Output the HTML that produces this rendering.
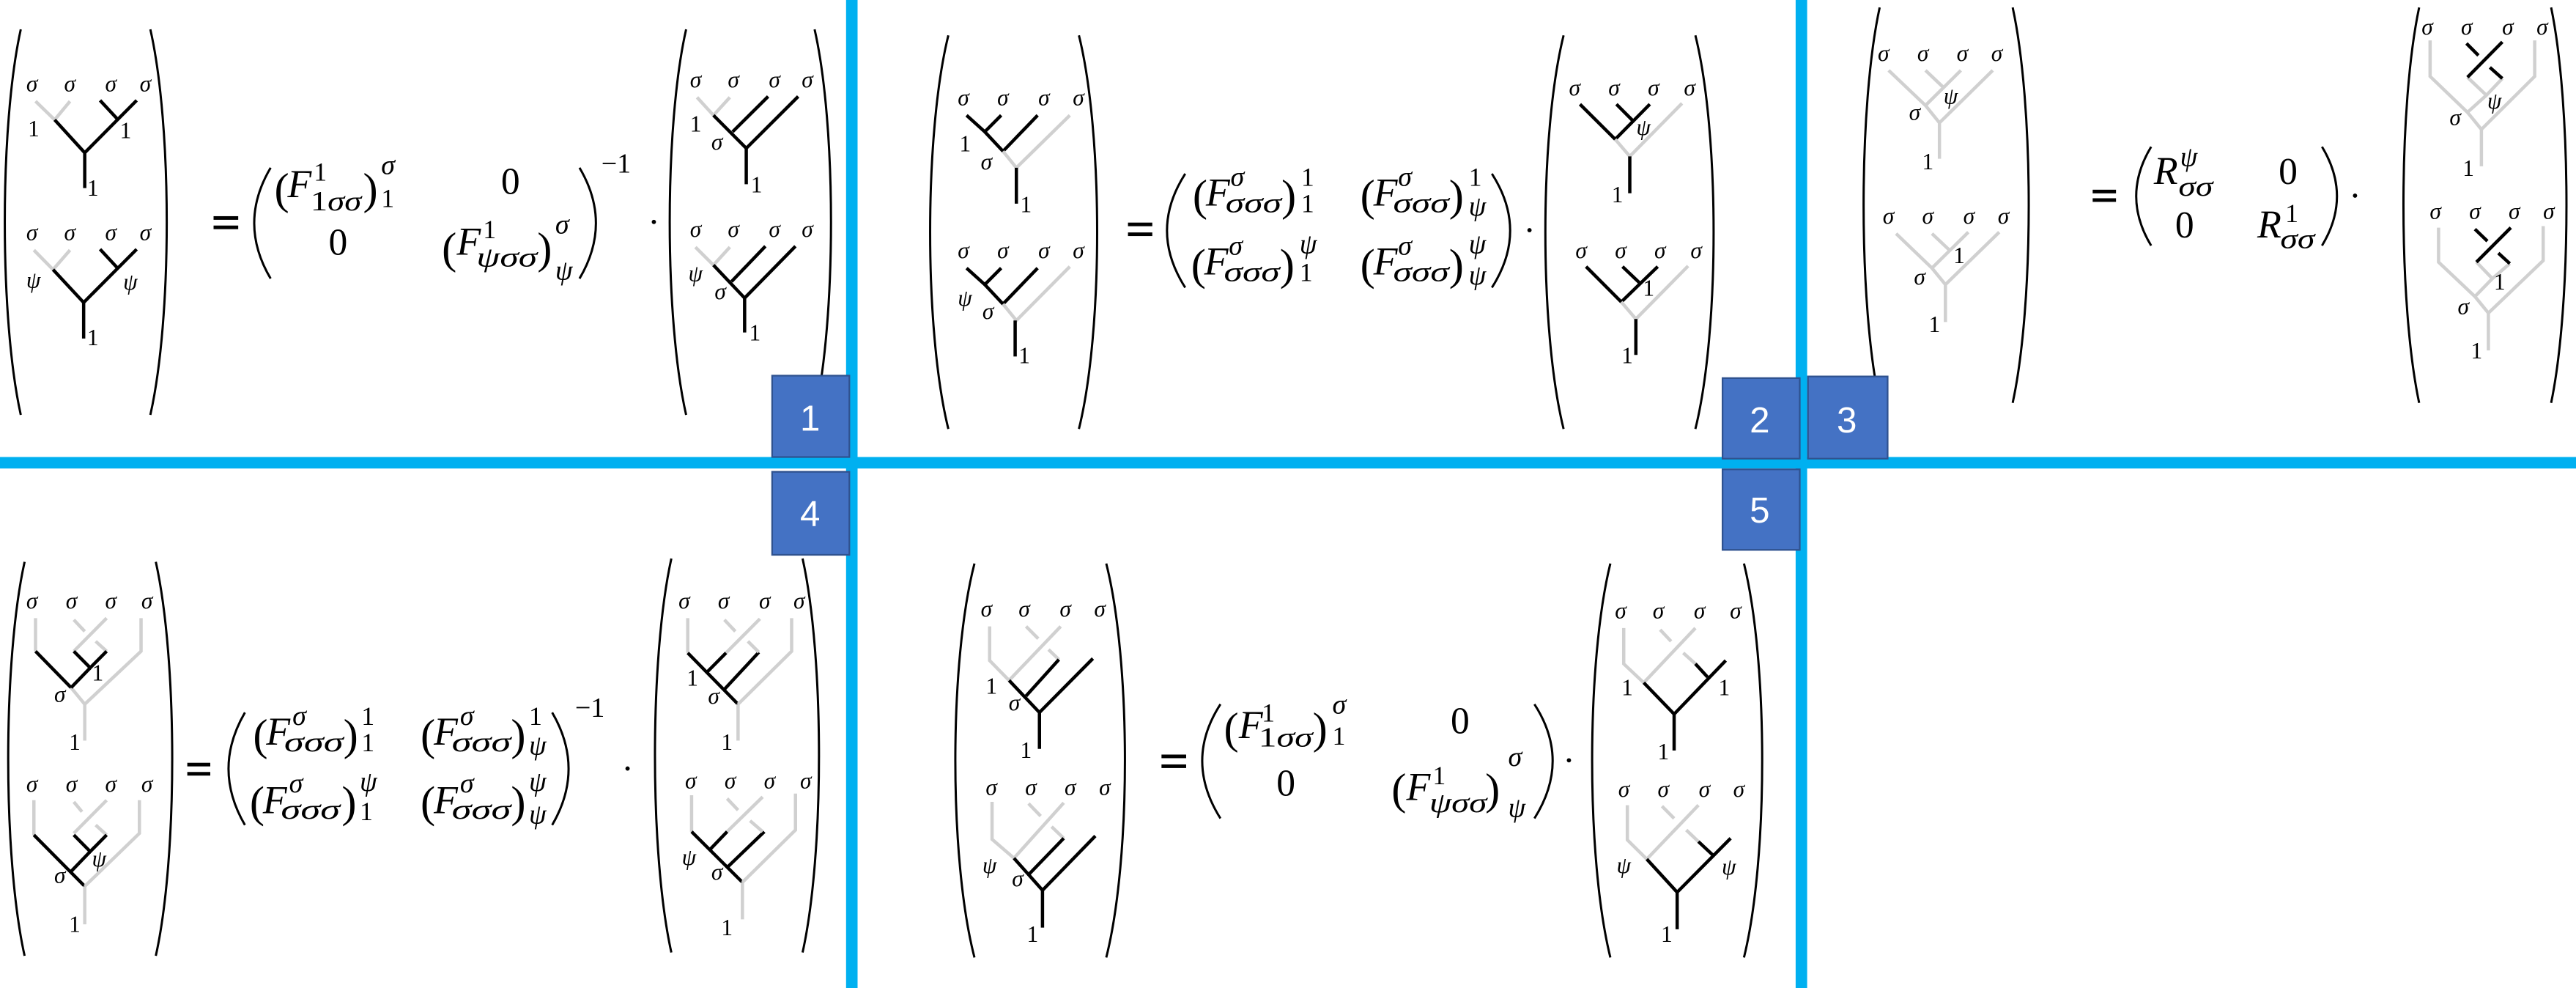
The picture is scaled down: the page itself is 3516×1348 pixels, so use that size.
<!DOCTYPE html>
<html><head><meta charset="utf-8"><style>
html,body{margin:0;padding:0;background:#fff;}
svg{display:block}
.b,.g,.p{fill:none;vector-effect:non-scaling-stroke;stroke-linecap:butt}
.b{stroke:#000;stroke-width:4.5}
.g{stroke:#d0d0d0;stroke-width:4.5}
.p{stroke:#000;stroke-width:3}
text{font-family:"Liberation Serif",serif;fill:#000}
.s{font-style:italic;font-size:14px}
.n{font-size:14px}
.m{font-style:italic;font-size:24px}
.r{font-size:23px}
.pp{font-size:27px}
.ss{font-style:italic;font-size:17px}
.sn{font-size:16px}
.bx{fill:#4472C4;stroke:#2F528F;stroke-width:1}
.bt{font-family:"Liberation Sans",sans-serif;font-size:22px;fill:#fff}
</style></head><body>
<svg width="3516" height="1348" viewBox="0 0 1568 601" preserveAspectRatio="none" xmlns="http://www.w3.org/2000/svg">
<rect width="1568" height="601" fill="#fff"/>

<!-- PANEL 1 -->
<g transform="translate(0,0) scale(0.33278,0.18221)">
<path class="p" d="M38 98 C-1 420 -1 1063 38 1385"/><path class="p" d="M275 98 C315 420 315 1063 275 1385"/>
<polyline class="g" points="65,338 100,400 128,338"/>
<polyline class="b" points="100,400 155,510"/><polyline class="b" points="183,335 215,398"/><polyline class="b" points="250,335 155,510 155,628"/>
<polyline class="g" points="62,835 97,900 128,835"/>
<polyline class="b" points="97,900 153,1010"/><polyline class="b" points="183,832 215,895"/><polyline class="b" points="250,832 153,1010 153,1130"/>
<path class="p" d="M495 560 Q435 745 495 930"/><path class="p" d="M1060 560 Q1120 745 1060 930"/>
<path class="p" d="M1255 98 C1215 420 1215 1063 1255 1385"/><path class="p" d="M1490 98 C1530 420 1530 1063 1490 1385"/>
<polyline class="g" points="1275,325 1305,385 1335,325"/>
<polyline class="b" points="1305,385 1365,495 1365,615"/><polyline class="b" points="1405,322 1340,440"/><polyline class="b" points="1460,322 1365,495"/>
<polyline class="g" points="1272,825 1305,885 1335,825"/>
<polyline class="b" points="1305,885 1362,995 1362,1110"/><polyline class="b" points="1400,822 1338,940"/><polyline class="b" points="1455,822 1362,995"/>
</g>
<text class="s" x="16" y="55.5">σ</text><text class="s" x="39" y="55.5">σ</text><text class="s" x="64" y="55.5">σ</text><text class="s" x="85" y="55.5">σ</text>
<text class="n" x="17" y="83">1</text><text class="n" x="73" y="84">1</text><text class="n" x="53" y="119">1</text>
<text class="s" x="16" y="146">σ</text><text class="s" x="39" y="146">σ</text><text class="s" x="64" y="146">σ</text><text class="s" x="85" y="146">σ</text>
<text class="s" x="16" y="175">ψ</text><text class="s" x="75" y="176">ψ</text><text class="n" x="53" y="210">1</text>
<rect x="130" y="131.5" width="15" height="2.2"/><rect x="130" y="137.2" width="15" height="2.2"/>
<text class="pp" x="167" y="124">(</text><text class="m" x="175" y="120">F</text><text class="sn" x="191" y="110">1</text><text class="ss" x="189" y="128" textLength="31" lengthAdjust="spacingAndGlyphs"><tspan font-style="normal">1</tspan>σσ</text><text class="pp" x="221" y="124">)</text><text class="ss" x="232" y="106">σ</text><text class="sn" x="232" y="126">1</text>
<text class="r" x="305" y="118">0</text>
<text class="r" x="200" y="155">0</text>
<text class="pp" x="269" y="160">(</text><text class="m" x="278" y="155">F</text><text class="sn" x="294" y="145">1</text><text class="ss" x="290" y="162" textLength="37" lengthAdjust="spacingAndGlyphs">ψσσ</text><text class="pp" x="327" y="160">)</text><text class="ss" x="338" y="142">σ</text><text class="ss" x="338" y="170">ψ</text>
<text x="366" y="105" font-family="Liberation Sans" font-size="17">−1</text>
<circle cx="398" cy="135" r="1.3"/>
<text class="s" x="420" y="53">σ</text><text class="s" x="443" y="53">σ</text><text class="s" x="468" y="53">σ</text><text class="s" x="488" y="53">σ</text>
<text class="n" x="420" y="80">1</text><text class="s" x="433" y="91">σ</text><text class="n" x="457" y="117">1</text>
<text class="s" x="420" y="144">σ</text><text class="s" x="443" y="144">σ</text><text class="s" x="468" y="144">σ</text><text class="s" x="488" y="144">σ</text>
<text class="s" x="419" y="171">ψ</text><text class="s" x="435" y="182">σ</text><text class="n" x="456" y="207">1</text>

<!-- PANEL 2 -->
<g transform="translate(521.8,0) scale(0.36969,0.18221)">
<path class="p" d="M150 118 C110 446 110 1104 150 1432"/><path class="p" d="M365 118 C405 446 405 1104 365 1432"/>
<polyline class="b" points="180,385 210,440 237,385"/><polyline class="b" points="210,440 240,505 297,385"/>
<polyline class="g" points="240,505 262,560 350,385"/><polyline class="b" points="262,560 262,680"/>
<polyline class="b" points="180,895 210,950 237,895"/><polyline class="b" points="210,950 240,1015 297,895"/>
<polyline class="g" points="240,1015 262,1070 350,890"/><polyline class="b" points="260,1070 260,1190"/>
<path class="p" d="M540 580 Q480 770 540 960"/><path class="p" d="M1045 580 Q1105 770 1045 960"/>
<path class="p" d="M1163 118 C1123 446 1123 1104 1163 1432"/><path class="p" d="M1380 118 C1420 446 1420 1104 1380 1432"/>
<polyline class="b" points="1190,348 1248,465 1305,348"/><polyline class="b" points="1250,348 1278,405"/>
<polyline class="g" points="1248,465 1272,522 1358,345"/><polyline class="b" points="1272,522 1272,645"/>
<polyline class="b" points="1200,890 1258,1008 1318,890"/><polyline class="b" points="1260,890 1290,948"/>
<polyline class="g" points="1258,1008 1282,1065 1368,888"/><polyline class="b" points="1282,1065 1282,1185"/>
</g>
<text class="s" x="583" y="64">σ</text><text class="s" x="607" y="64">σ</text><text class="s" x="632" y="64">σ</text><text class="s" x="653" y="64">σ</text>
<text class="n" x="584" y="92">1</text><text class="s" x="597" y="103">σ</text><text class="n" x="621" y="129">1</text>
<text class="s" x="583" y="157">σ</text><text class="s" x="607" y="157">σ</text><text class="s" x="632" y="157">σ</text><text class="s" x="653" y="157">σ</text>
<text class="s" x="583" y="186">ψ</text><text class="s" x="598" y="194">σ</text><text class="n" x="620" y="221">1</text>
<rect x="686.6" y="135.4" width="14.8" height="2.2"/><rect x="686.6" y="141.4" width="14.8" height="2.2"/>
<text class="pp" x="726" y="128">(</text><text class="m" x="734" y="125">F</text><text class="ss" x="749" y="113">σ</text><text class="ss" x="746" y="129" textLength="34" lengthAdjust="spacingAndGlyphs">σσσ</text><text class="pp" x="780" y="128">)</text><text class="sn" x="792" y="113">1</text><text class="sn" x="792" y="129">1</text>
<text class="pp" x="828" y="128">(</text><text class="m" x="836" y="125">F</text><text class="ss" x="851" y="113">σ</text><text class="ss" x="848" y="129" textLength="34" lengthAdjust="spacingAndGlyphs">σσσ</text><text class="pp" x="882" y="128">)</text><text class="sn" x="894" y="113">1</text><text class="ss" x="894" y="131">ψ</text>
<text class="pp" x="725" y="170">(</text><text class="m" x="733" y="167">F</text><text class="ss" x="748" y="155">σ</text><text class="ss" x="745" y="171" textLength="34" lengthAdjust="spacingAndGlyphs">σσσ</text><text class="pp" x="779" y="170">)</text><text class="ss" x="791" y="154">ψ</text><text class="sn" x="791" y="171">1</text>
<text class="pp" x="828" y="170">(</text><text class="m" x="836" y="167">F</text><text class="ss" x="851" y="155">σ</text><text class="ss" x="848" y="171" textLength="34" lengthAdjust="spacingAndGlyphs">σσσ</text><text class="pp" x="882" y="170">)</text><text class="ss" x="894" y="154">ψ</text><text class="ss" x="894" y="173">ψ</text>
<circle cx="931" cy="140" r="1.3"/>
<text class="s" x="955" y="58">σ</text><text class="s" x="979" y="58">σ</text><text class="s" x="1003" y="58">σ</text><text class="s" x="1025" y="58">σ</text>
<text class="s" x="996" y="82">ψ</text><text class="n" x="981" y="123">1</text>
<text class="s" x="959" y="157">σ</text><text class="s" x="983" y="157">σ</text><text class="s" x="1007" y="157">σ</text><text class="s" x="1029" y="157">σ</text>
<text class="n" x="1000" y="180">1</text><text class="n" x="987" y="221">1</text>

<!-- PANEL 3 -->
<g transform="translate(1092.6,0) scale(0.30321,0.18221)">
<path class="p" d="M170 25 C127 355 127 1015 170 1345"/><path class="p" d="M437 25 C480 355 480 1015 437 1345"/>
<polyline class="g" points="188,235 262,352 290,410 397,235"/><polyline class="g" points="262,235 300,295"/><polyline class="g" points="333,235 262,352"/><polyline class="g" points="290,410 290,530"/>
<polyline class="g" points="203,780 275,895 302,950 410,775"/><polyline class="g" points="275,780 312,838"/><polyline class="g" points="348,775 275,895"/><polyline class="g" points="302,950 302,1075"/>
<path class="p" d="M715 490 Q655 655 715 820"/><path class="p" d="M1058 490 Q1118 655 1058 820"/>
<path class="p" d="M1253 25 C1211 355 1211 1015 1253 1345"/><path class="p" d="M1518 25 C1559 355 1559 1015 1518 1345"/>
<polyline class="g" points="1275,135 1275,255 1350,375 1378,432 1378,555"/>
<polyline class="g" points="1485,135 1485,255 1378,432"/>
<polyline class="g" points="1350,258 1388,318 1420,262"/><polyline class="g" points="1388,318 1350,375"/>
<polyline class="b" points="1420,140 1350,258"/><polyline class="b" points="1348,145 1372,185"/><polyline class="b" points="1395,225 1420,262"/>
<polyline class="g" points="1292,760 1292,875 1365,990 1392,1045 1392,1170"/>
<polyline class="g" points="1502,755 1502,870 1392,1045"/>
<polyline class="g" points="1368,875 1400,930 1435,880"/><polyline class="g" points="1400,930 1365,990"/>
<polyline class="b" points="1437,760 1368,875"/><polyline class="b" points="1365,765 1390,805"/><polyline class="b" points="1412,845 1435,880"/>
</g>
<text class="s" x="1143" y="37">σ</text><text class="s" x="1167" y="37">σ</text><text class="s" x="1191" y="37">σ</text><text class="s" x="1212" y="37">σ</text>
<text class="s" x="1183" y="63">ψ</text><text class="s" x="1162" y="73">σ</text><text class="n" x="1170" y="103">1</text>
<text class="s" x="1146" y="136">σ</text><text class="s" x="1170" y="136">σ</text><text class="s" x="1195" y="136">σ</text><text class="s" x="1216" y="136">σ</text>
<text class="n" x="1189" y="160">1</text><text class="s" x="1165" y="173">σ</text><text class="n" x="1174" y="202">1</text>
<rect x="1273.8" y="115.4" width="14.2" height="2.2"/><rect x="1273.8" y="120.6" width="14.2" height="2.2"/>
<text class="m" x="1311" y="112">R</text><text class="ss" x="1327" y="101">ψ</text><text class="ss" x="1326" y="119" textLength="21" lengthAdjust="spacingAndGlyphs">σσ</text><text class="r" x="1387" y="112">0</text>
<text class="r" x="1324" y="144.5">0</text><text class="m" x="1374" y="144.5">R</text><text class="sn" x="1391" y="135">1</text><text class="ss" x="1388" y="151" textLength="21" lengthAdjust="spacingAndGlyphs">σσ</text>
<circle cx="1433.5" cy="119" r="1.3"/>
<text class="s" x="1474" y="21">σ</text><text class="s" x="1498" y="21">σ</text><text class="s" x="1523" y="21">σ</text><text class="s" x="1544" y="21">σ</text>
<text class="s" x="1514" y="66">ψ</text><text class="s" x="1491" y="76">σ</text><text class="n" x="1499" y="107">1</text>
<text class="s" x="1479" y="133">σ</text><text class="s" x="1503" y="133">σ</text><text class="s" x="1527" y="133">σ</text><text class="s" x="1548" y="133">σ</text>
<text class="n" x="1518" y="176">1</text><text class="s" x="1496" y="191">σ</text><text class="n" x="1504" y="218">1</text>

<!-- PANEL 4 -->
<g transform="translate(0,285.4) scale(0.33278,0.20137)">
<path class="p" d="M45 280 C5 578 5 1173 45 1470"/><path class="p" d="M285 280 C325 578 325 1173 285 1470"/>
<polyline class="g" points="65,450 65,550"/><polyline class="b" points="65,550 130,660"/><polyline class="g" points="130,660 155,710 155,820"/>
<polyline class="g" points="258,450 258,550 155,710"/>
<polyline class="g" points="195,450 135,550"/><polyline class="g" points="135,455 155,490"/><polyline class="g" points="175,520 195,550"/>
<polyline class="b" points="135,550 165,600 195,550"/><polyline class="b" points="165,600 130,660"/>
<polyline class="g" points="62,1000 62,1105"/><polyline class="b" points="62,1105 155,1260"/><polyline class="g" points="155,1260 155,1375"/>
<polyline class="g" points="255,1000 255,1100 155,1260"/>
<polyline class="g" points="195,1000 135,1100"/><polyline class="g" points="135,1005 150,1035"/><polyline class="g" points="175,1075 195,1105"/>
<polyline class="b" points="135,1105 165,1155 195,1105"/><polyline class="b" points="165,1155 130,1215"/>
<path class="p" d="M448 735 Q388 905 448 1075"/><path class="p" d="M1010 735 Q1070 905 1010 1075"/>
<path class="p" d="M1228 270 C1188 568 1188 1163 1228 1460"/><path class="p" d="M1468 270 C1508 568 1508 1163 1468 1460"/>
<polyline class="g" points="1258,450 1258,555"/><polyline class="b" points="1258,555 1350,710"/><polyline class="g" points="1350,710 1350,820"/>
<polyline class="g" points="1390,452 1328,555"/><polyline class="b" points="1328,555 1292,615"/><polyline class="b" points="1388,553 1325,665"/>
<polyline class="g" points="1325,455 1345,490"/><polyline class="g" points="1368,520 1388,553"/>
<polyline class="g" points="1448,450 1448,550 1350,710"/>
<polyline class="g" points="1265,985 1265,1095"/><polyline class="b" points="1265,1095 1358,1248"/><polyline class="g" points="1358,1248 1358,1360"/>
<polyline class="g" points="1395,990 1330,1095"/><polyline class="b" points="1330,1095 1298,1150"/><polyline class="b" points="1398,1095 1332,1200"/>
<polyline class="g" points="1330,995 1350,1030"/><polyline class="g" points="1372,1062 1395,1095"/>
<polyline class="g" points="1455,980 1455,1090 1358,1248"/>
</g>
<text class="s" x="16" y="370">σ</text><text class="s" x="40" y="370">σ</text><text class="s" x="64" y="370">σ</text><text class="s" x="86" y="370">σ</text>
<text class="n" x="56" y="414">1</text><text class="s" x="33" y="427">σ</text><text class="n" x="42" y="456">1</text>
<text class="s" x="16" y="481.6">σ</text><text class="s" x="40" y="481.6">σ</text><text class="s" x="64" y="481.6">σ</text><text class="s" x="86" y="481.6">σ</text>
<text class="s" x="56" y="527">ψ</text><text class="s" x="33" y="537">σ</text><text class="n" x="42" y="567">1</text>
<rect x="114" y="464" width="14" height="2.2"/><rect x="114" y="469.6" width="14" height="2.2"/>
<text class="pp" x="154" y="456">(</text><text class="m" x="162" y="453">F</text><text class="ss" x="178" y="441">σ</text><text class="ss" x="173" y="457" textLength="36" lengthAdjust="spacingAndGlyphs">σσσ</text><text class="pp" x="209" y="456">)</text><text class="sn" x="220" y="441">1</text><text class="sn" x="220" y="457">1</text>
<text class="pp" x="256" y="456">(</text><text class="m" x="264" y="453">F</text><text class="ss" x="280" y="441">σ</text><text class="ss" x="275" y="457" textLength="36" lengthAdjust="spacingAndGlyphs">σσσ</text><text class="pp" x="311" y="456">)</text><text class="sn" x="322" y="441">1</text><text class="ss" x="322" y="459">ψ</text>
<text class="pp" x="152" y="497">(</text><text class="m" x="160" y="494.7">F</text><text class="ss" x="176" y="482">σ</text><text class="ss" x="171" y="498" textLength="36" lengthAdjust="spacingAndGlyphs">σσσ</text><text class="pp" x="208" y="497">)</text><text class="ss" x="219" y="481">ψ</text><text class="sn" x="219" y="499">1</text>
<text class="pp" x="256" y="497">(</text><text class="m" x="264" y="494.7">F</text><text class="ss" x="280" y="482">σ</text><text class="ss" x="275" y="498" textLength="36" lengthAdjust="spacingAndGlyphs">σσσ</text><text class="pp" x="311" y="497">)</text><text class="ss" x="322" y="481">ψ</text><text class="ss" x="322" y="501">ψ</text>
<text x="350" y="436" font-family="Liberation Sans" font-size="17">−1</text>
<circle cx="382" cy="467.5" r="1.3"/>
<text class="s" x="413" y="370">σ</text><text class="s" x="437" y="370">σ</text><text class="s" x="462" y="370">σ</text><text class="s" x="483" y="370">σ</text>
<text class="n" x="418" y="417">1</text><text class="s" x="431" y="428">σ</text><text class="n" x="439" y="456">1</text>
<text class="s" x="417" y="479.6">σ</text><text class="s" x="441" y="479.6">σ</text><text class="s" x="465" y="479.6">σ</text><text class="s" x="487" y="479.6">σ</text>
<text class="s" x="415" y="526">ψ</text><text class="s" x="433" y="535">σ</text><text class="n" x="439" y="569">1</text>

<!-- PANEL 5 -->
<g transform="translate(521.8,285.4) scale(0.36969,0.20137)">
<path class="p" d="M193 285 C151 583 151 1178 193 1475"/><path class="p" d="M410 285 C451 583 451 1178 410 1475"/>
<polyline class="g" points="218,475 218,578 250,638"/><polyline class="g" points="335,475 250,638"/>
<polyline class="g" points="278,475 298,512"/><polyline class="g" points="315,545 332,575"/>
<polyline class="b" points="332,575 278,685"/><polyline class="b" points="388,572 300,735"/><polyline class="b" points="250,638 300,735 300,845"/>
<polyline class="g" points="222,1005 222,1118 258,1175"/><polyline class="g" points="340,1008 258,1175"/>
<polyline class="g" points="282,1010 302,1048"/><polyline class="g" points="320,1080 340,1115"/>
<polyline class="b" points="340,1115 282,1225"/><polyline class="b" points="392,1108 305,1272"/><polyline class="b" points="258,1175 305,1272 305,1385"/>
<path class="p" d="M598 710 Q538 880 598 1055"/><path class="p" d="M1115 710 Q1175 880 1115 1055"/>
<path class="p" d="M1240 285 C1200 583 1200 1178 1240 1475"/><path class="p" d="M1460 285 C1500 583 1500 1178 1460 1475"/>
<polyline class="g" points="1262,480 1262,588 1295,645"/><polyline class="g" points="1380,480 1295,645"/>
<polyline class="g" points="1322,485 1340,520"/><polyline class="g" points="1360,555 1380,588"/>
<polyline class="b" points="1380,588 1400,628"/><polyline class="b" points="1430,578 1345,740"/><polyline class="b" points="1295,645 1345,740 1345,850"/>
<polyline class="g" points="1268,1015 1268,1120 1300,1178"/><polyline class="g" points="1385,1015 1300,1178"/>
<polyline class="g" points="1325,1018 1345,1055"/><polyline class="g" points="1365,1090 1385,1125"/>
<polyline class="b" points="1385,1125 1410,1168"/><polyline class="b" points="1438,1115 1350,1278"/><polyline class="b" points="1300,1178 1350,1278 1350,1390"/>
</g>
<text class="s" x="597" y="375">σ</text><text class="s" x="620" y="375">σ</text><text class="s" x="645" y="375">σ</text><text class="s" x="666" y="375">σ</text>
<text class="n" x="600" y="422">1</text><text class="s" x="614" y="432">σ</text><text class="n" x="621" y="461">1</text>
<text class="s" x="600" y="483.6">σ</text><text class="s" x="624" y="483.6">σ</text><text class="s" x="648" y="483.6">σ</text><text class="s" x="669" y="483.6">σ</text>
<text class="s" x="598" y="531">ψ</text><text class="s" x="616" y="539">σ</text><text class="n" x="625" y="573">1</text>
<rect x="707" y="459" width="15" height="2.2"/><rect x="707" y="465" width="15" height="2.2"/>
<text class="pp" x="745" y="452">(</text><text class="m" x="754" y="449">F</text><text class="sn" x="768" y="439">1</text><text class="ss" x="766" y="454" textLength="33" lengthAdjust="spacingAndGlyphs"><tspan font-style="normal">1</tspan>σσ</text><text class="pp" x="799" y="452">)</text><text class="ss" x="811" y="434">σ</text><text class="sn" x="811" y="453">1</text>
<text class="r" x="883" y="446">0</text>
<text class="r" x="777" y="484">0</text>
<text class="pp" x="847" y="489">(</text><text class="m" x="856" y="486.6">F</text><text class="sn" x="872" y="477">1</text><text class="ss" x="870" y="494" textLength="35" lengthAdjust="spacingAndGlyphs">ψσσ</text><text class="pp" x="904" y="489">)</text><text class="ss" x="918" y="466">σ</text><text class="ss" x="918" y="497">ψ</text>
<circle cx="955" cy="462.5" r="1.3"/>
<text class="s" x="983" y="376">σ</text><text class="s" x="1006" y="376">σ</text><text class="s" x="1031" y="376">σ</text><text class="s" x="1053" y="376">σ</text>
<text class="n" x="987" y="423">1</text><text class="n" x="1046" y="423">1</text><text class="n" x="1009" y="462">1</text>
<text class="s" x="985" y="484.6">σ</text><text class="s" x="1009" y="484.6">σ</text><text class="s" x="1034" y="484.6">σ</text><text class="s" x="1055" y="484.6">σ</text>
<text class="s" x="984" y="531">ψ</text><text class="s" x="1048" y="532">ψ</text><text class="n" x="1011" y="573">1</text>

<!-- blue lines -->
<rect x="0" y="278" width="1568" height="7" fill="#00B0F0"/>
<rect x="515" y="0" width="7" height="601" fill="#00B0F0"/>
<rect x="1093" y="0" width="7" height="601" fill="#00B0F0"/>

<!-- boxes -->
<rect class="bx" x="470" y="228.5" width="47" height="49.5"/><text class="bt" x="487" y="262">1</text>
<rect class="bx" x="1048.5" y="230" width="47" height="49"/><text class="bt" x="1065" y="263">2</text>
<rect class="bx" x="1100.5" y="229" width="48.5" height="50"/><text class="bt" x="1118" y="263">3</text>
<rect class="bx" x="470" y="287" width="47" height="50.5"/><text class="bt" x="487" y="320">4</text>
<rect class="bx" x="1048.5" y="285.5" width="47" height="49"/><text class="bt" x="1065" y="318">5</text>
</svg>
</body></html>
